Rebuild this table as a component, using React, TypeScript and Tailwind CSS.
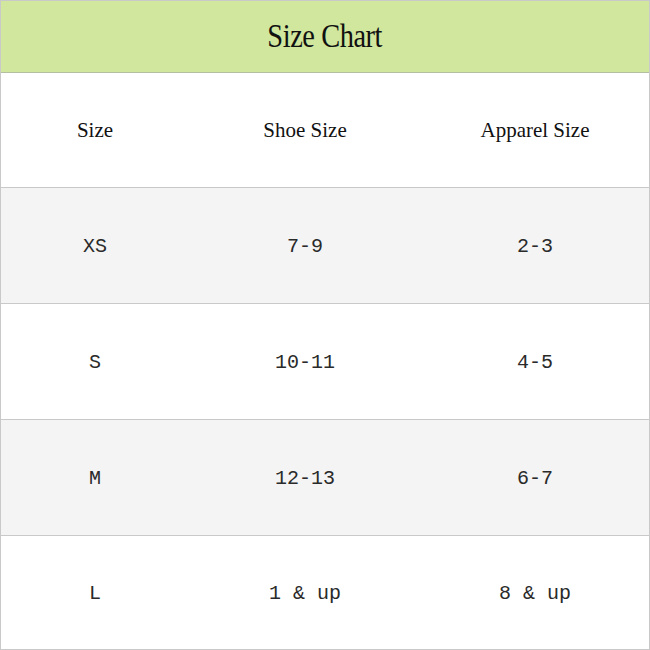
import React from "react";

const rows = [
  ["XS", "7-9", "2-3"],
  ["S", "10-11", "4-5"],
  ["M", "12-13", "6-7"],
  ["L", "1 & up", "8 & up"],
];

export default function App() {
  return (
    <div className="w-[650px] h-[650px] flex flex-col border border-[#c9c9c9] bg-white">
      <div className="h-[72px] shrink-0 bg-[#d0e79d] border-b border-[#b3bfa0] flex items-center justify-center">
        <span className="inline-block scale-x-[0.86] text-[33px] tracking-[-0.5px] text-[#111] font-['Liberation_Serif',serif]">
          Size Chart
        </span>
      </div>
      <div className="h-[114px] shrink-0 grid grid-cols-[188px_232px_1fr] items-center pt-[2px] text-center text-[21px] text-[#111] font-['Liberation_Serif',serif]">
        <div>Size</div>
        <div>Shoe Size</div>
        <div>Apparel Size</div>
      </div>
      {rows.map((r, i) => (
        <div
          key={i}
          className={
            i === rows.length - 1
              ? "flex-1 grid grid-cols-[188px_232px_1fr] items-center pt-[3px] text-center text-[20px] text-[#2a2a2a] border-t border-[#c9c9c9] bg-white font-['Liberation_Mono',monospace]"
              : i % 2 === 0
              ? "h-[116px] shrink-0 grid grid-cols-[188px_232px_1fr] items-center pt-[3px] text-center text-[20px] text-[#2a2a2a] border-t border-[#c9c9c9] bg-[#f4f4f4] font-['Liberation_Mono',monospace]"
              : "h-[116px] shrink-0 grid grid-cols-[188px_232px_1fr] items-center pt-[3px] text-center text-[20px] text-[#2a2a2a] border-t border-[#c9c9c9] bg-white font-['Liberation_Mono',monospace]"
          }
        >
          <div>{r[0]}</div>
          <div>{r[1]}</div>
          <div>{r[2]}</div>
        </div>
      ))}
    </div>
  );
}
